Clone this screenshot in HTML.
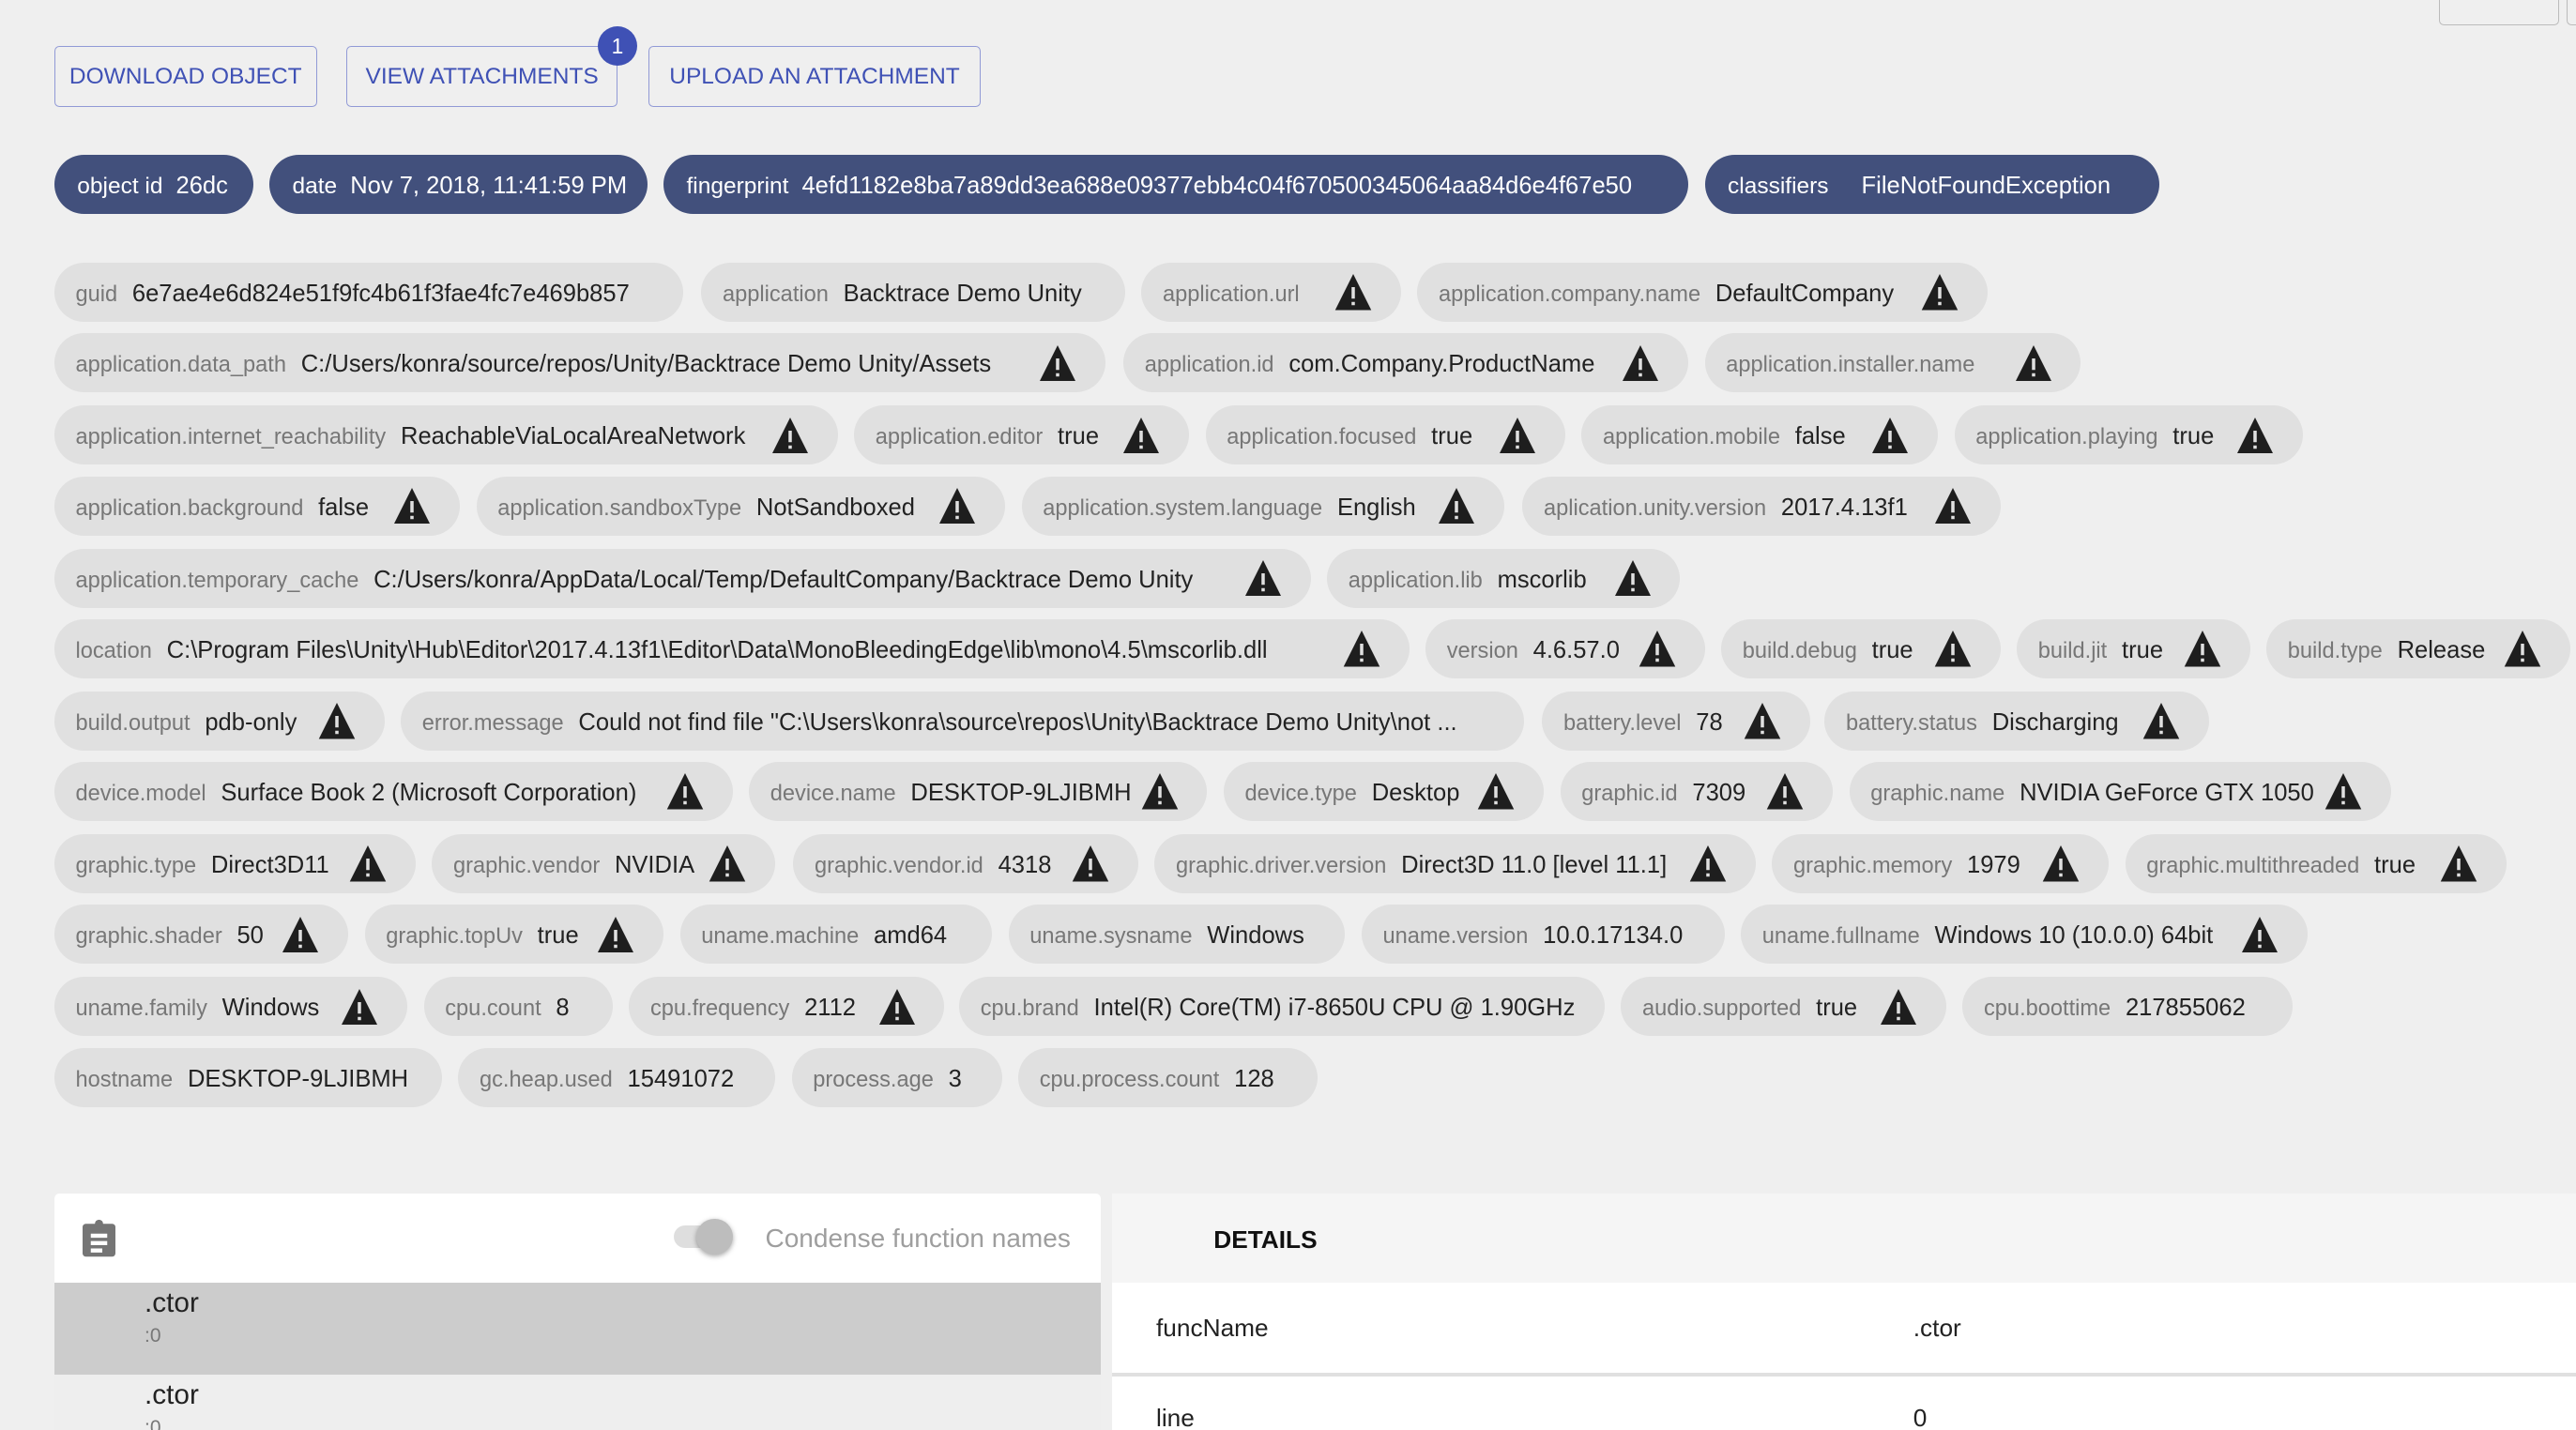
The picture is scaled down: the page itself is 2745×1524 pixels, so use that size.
<!DOCTYPE html>
<html><head><meta charset="utf-8"><style>
html,body{margin:0;padding:0;background:#efefef;overflow:hidden}
body{width:2745px;height:1524px}
#w{zoom:1.75;position:relative;width:1569px;height:871px;font-family:"Liberation Sans",Arial,sans-serif}
.b{position:absolute;top:28px;height:37px;box-sizing:border-box;border:1px solid #919ad6;border-radius:3px;color:#3f51b5;font-size:14px;line-height:36px;text-align:center}
.badge{position:absolute;left:364px;top:16px;width:24px;height:24px;border-radius:50%;background:#3f51b5;color:#fff;font-size:13px;line-height:24px;text-align:center}
.d{position:absolute;top:94px;height:36px;border-radius:18px;background:#42507c;color:#fff;white-space:nowrap;line-height:36px;box-sizing:border-box;padding-left:14px}
.d .l{font-size:14px;margin-right:8px}.d .v{font-size:14.6px}
.p{position:absolute;height:36px;border-radius:18px;background:#e0e0e0;white-space:nowrap;line-height:36px;box-sizing:border-box;padding-left:13px;overflow:hidden}
.p .l{font-size:13.5px;color:#777;margin-right:9px}.p .v{font-size:14.6px;color:#222}
.p svg{position:absolute;right:17px;top:7px;width:24px;height:22px}
</style></head><body><div id="w">
<div style="position:absolute;left:1485px;top:-4px;width:72px;height:18px;border:1px solid #bbb;border-radius:3px"></div>
<div style="position:absolute;left:1563px;top:-4px;width:20px;height:18px;border:1px solid #bbb;border-radius:3px"></div>
<div class="b" style="left:33px;width:160px">DOWNLOAD OBJECT</div>
<div class="b" style="left:211px;width:165px">VIEW ATTACHMENTS</div>
<div class="badge">1</div>
<div class="b" style="left:395px;width:202px">UPLOAD AN ATTACHMENT</div>
<div class="d" style="left:33px;width:121px"><span class="l">object id</span><span class="v">26dc</span></div>
<div class="d" style="left:164px;width:230px"><span class="l">date</span><span class="v">Nov 7, 2018, 11:41:59 PM</span></div>
<div class="d" style="left:404px;width:624px"><span class="l">fingerprint</span><span class="v">4efd1182e8ba7a89dd3ea688e09377ebb4c04f670500345064aa84d6e4f67e50</span></div>
<div class="d" style="left:1038px;width:277px"><span class="l" style="margin-right:20px">classifiers</span><span class="v">FileNotFoundException</span></div>
<svg width="0" height="0" style="position:absolute"><defs><symbol id="wn" viewBox="0 0 24 22"><path d="M12 0L23 22H1Z" fill="#1e1e1e"/><rect x="11" y="8" width="2" height="7" fill="#e0e0e0"/><rect x="11" y="17" width="2" height="2" fill="#e0e0e0"/></symbol></defs></svg>
<div class="p" style="top:160px;left:33px;width:383px"><span class="l">guid</span><span class="v">6e7ae4e6d824e51f9fc4b61f3fae4fc7e469b857</span></div>
<div class="p" style="top:160px;left:427px;width:258px"><span class="l">application</span><span class="v">Backtrace Demo Unity</span></div>
<div class="p" style="top:160px;left:695px;width:158px"><span class="l">application.url</span><svg><use href="#wn"/></svg></div>
<div class="p" style="top:160px;left:863px;width:347px"><span class="l">application.company.name</span><span class="v">DefaultCompany</span><svg><use href="#wn"/></svg></div>
<div class="p" style="top:203px;left:33px;width:640px"><span class="l">application.data_path</span><span class="v">C:/Users/konra/source/repos/Unity/Backtrace Demo Unity/Assets</span><svg><use href="#wn"/></svg></div>
<div class="p" style="top:203px;left:684px;width:344px"><span class="l">application.id</span><span class="v">com.Company.ProductName</span><svg><use href="#wn"/></svg></div>
<div class="p" style="top:203px;left:1038px;width:229px"><span class="l">application.installer.name</span><svg><use href="#wn"/></svg></div>
<div class="p" style="top:247px;left:33px;width:477px"><span class="l">application.internet_reachability</span><span class="v">ReachableViaLocalAreaNetwork</span><svg><use href="#wn"/></svg></div>
<div class="p" style="top:247px;left:520px;width:204px"><span class="l">application.editor</span><span class="v">true</span><svg><use href="#wn"/></svg></div>
<div class="p" style="top:247px;left:734px;width:219px"><span class="l">application.focused</span><span class="v">true</span><svg><use href="#wn"/></svg></div>
<div class="p" style="top:247px;left:963px;width:217px"><span class="l">application.mobile</span><span class="v">false</span><svg><use href="#wn"/></svg></div>
<div class="p" style="top:247px;left:1190px;width:212px"><span class="l">application.playing</span><span class="v">true</span><svg><use href="#wn"/></svg></div>
<div class="p" style="top:290px;left:33px;width:247px"><span class="l">application.background</span><span class="v">false</span><svg><use href="#wn"/></svg></div>
<div class="p" style="top:290px;left:290px;width:322px"><span class="l">application.sandboxType</span><span class="v">NotSandboxed</span><svg><use href="#wn"/></svg></div>
<div class="p" style="top:290px;left:622px;width:294px"><span class="l">application.system.language</span><span class="v">English</span><svg><use href="#wn"/></svg></div>
<div class="p" style="top:290px;left:927px;width:291px"><span class="l">aplication.unity.version</span><span class="v">2017.4.13f1</span><svg><use href="#wn"/></svg></div>
<div class="p" style="top:334px;left:33px;width:765px"><span class="l">application.temporary_cache</span><span class="v">C:/Users/konra/AppData/Local/Temp/DefaultCompany/Backtrace Demo Unity</span><svg><use href="#wn"/></svg></div>
<div class="p" style="top:334px;left:808px;width:215px"><span class="l">application.lib</span><span class="v">mscorlib</span><svg><use href="#wn"/></svg></div>
<div class="p" style="top:377px;left:33px;width:825px"><span class="l">location</span><span class="v">C:\Program Files\Unity\Hub\Editor\2017.4.13f1\Editor\Data\MonoBleedingEdge\lib\mono\4.5\mscorlib.dll</span><svg><use href="#wn"/></svg></div>
<div class="p" style="top:377px;left:868px;width:170px"><span class="l">version</span><span class="v">4.6.57.0</span><svg><use href="#wn"/></svg></div>
<div class="p" style="top:377px;left:1048px;width:170px"><span class="l">build.debug</span><span class="v">true</span><svg><use href="#wn"/></svg></div>
<div class="p" style="top:377px;left:1228px;width:142px"><span class="l">build.jit</span><span class="v">true</span><svg><use href="#wn"/></svg></div>
<div class="p" style="top:377px;left:1380px;width:185px"><span class="l">build.type</span><span class="v">Release</span><svg><use href="#wn"/></svg></div>
<div class="p" style="top:421px;left:33px;width:201px"><span class="l">build.output</span><span class="v">pdb-only</span><svg><use href="#wn"/></svg></div>
<div class="p" style="top:421px;left:244px;width:684px"><span class="l">error.message</span><span class="v">Could not find file "C:\Users\konra\source\repos\Unity\Backtrace Demo Unity\not ...</span></div>
<div class="p" style="top:421px;left:939px;width:163px"><span class="l">battery.level</span><span class="v">78</span><svg><use href="#wn"/></svg></div>
<div class="p" style="top:421px;left:1111px;width:234px"><span class="l">battery.status</span><span class="v">Discharging</span><svg><use href="#wn"/></svg></div>
<div class="p" style="top:464px;left:33px;width:413px"><span class="l">device.model</span><span class="v">Surface Book 2 (Microsoft Corporation)</span><svg><use href="#wn"/></svg></div>
<div class="p" style="top:464px;left:456px;width:279px"><span class="l">device.name</span><span class="v">DESKTOP-9LJIBMH</span><svg><use href="#wn"/></svg></div>
<div class="p" style="top:464px;left:745px;width:195px"><span class="l">device.type</span><span class="v">Desktop</span><svg><use href="#wn"/></svg></div>
<div class="p" style="top:464px;left:950px;width:166px"><span class="l">graphic.id</span><span class="v">7309</span><svg><use href="#wn"/></svg></div>
<div class="p" style="top:464px;left:1126px;width:330px"><span class="l">graphic.name</span><span class="v">NVIDIA GeForce GTX 1050</span><svg><use href="#wn"/></svg></div>
<div class="p" style="top:508px;left:33px;width:220px"><span class="l">graphic.type</span><span class="v">Direct3D11</span><svg><use href="#wn"/></svg></div>
<div class="p" style="top:508px;left:263px;width:209px"><span class="l">graphic.vendor</span><span class="v">NVIDIA</span><svg><use href="#wn"/></svg></div>
<div class="p" style="top:508px;left:483px;width:210px"><span class="l">graphic.vendor.id</span><span class="v">4318</span><svg><use href="#wn"/></svg></div>
<div class="p" style="top:508px;left:703px;width:366px"><span class="l">graphic.driver.version</span><span class="v">Direct3D 11.0 [level 11.1]</span><svg><use href="#wn"/></svg></div>
<div class="p" style="top:508px;left:1079px;width:205px"><span class="l">graphic.memory</span><span class="v">1979</span><svg><use href="#wn"/></svg></div>
<div class="p" style="top:508px;left:1294px;width:232px"><span class="l">graphic.multithreaded</span><span class="v">true</span><svg><use href="#wn"/></svg></div>
<div class="p" style="top:551px;left:33px;width:179px"><span class="l">graphic.shader</span><span class="v">50</span><svg><use href="#wn"/></svg></div>
<div class="p" style="top:551px;left:222px;width:182px"><span class="l">graphic.topUv</span><span class="v">true</span><svg><use href="#wn"/></svg></div>
<div class="p" style="top:551px;left:414px;width:190px"><span class="l">uname.machine</span><span class="v">amd64</span></div>
<div class="p" style="top:551px;left:614px;width:205px"><span class="l">uname.sysname</span><span class="v">Windows</span></div>
<div class="p" style="top:551px;left:829px;width:221px"><span class="l">uname.version</span><span class="v">10.0.17134.0</span></div>
<div class="p" style="top:551px;left:1060px;width:345px"><span class="l">uname.fullname</span><span class="v">Windows 10 (10.0.0) 64bit</span><svg><use href="#wn"/></svg></div>
<div class="p" style="top:595px;left:33px;width:215px"><span class="l">uname.family</span><span class="v">Windows</span><svg><use href="#wn"/></svg></div>
<div class="p" style="top:595px;left:258px;width:115px"><span class="l">cpu.count</span><span class="v">8</span></div>
<div class="p" style="top:595px;left:383px;width:192px"><span class="l">cpu.frequency</span><span class="v">2112</span><svg><use href="#wn"/></svg></div>
<div class="p" style="top:595px;left:584px;width:393px"><span class="l">cpu.brand</span><span class="v">Intel(R) Core(TM) i7-8650U CPU @ 1.90GHz</span></div>
<div class="p" style="top:595px;left:987px;width:198px"><span class="l">audio.supported</span><span class="v">true</span><svg><use href="#wn"/></svg></div>
<div class="p" style="top:595px;left:1195px;width:201px"><span class="l">cpu.boottime</span><span class="v">217855062</span></div>
<div class="p" style="top:638px;left:33px;width:236px"><span class="l">hostname</span><span class="v">DESKTOP-9LJIBMH</span></div>
<div class="p" style="top:638px;left:279px;width:193px"><span class="l">gc.heap.used</span><span class="v">15491072</span></div>
<div class="p" style="top:638px;left:482px;width:128px"><span class="l">process.age</span><span class="v">3</span></div>
<div class="p" style="top:638px;left:620px;width:182px"><span class="l">cpu.process.count</span><span class="v">128</span></div>

<div style="position:absolute;left:33px;top:727px;width:637px;height:150px;background:#fff;border-radius:3px 3px 0 0;overflow:hidden">
  <svg style="position:absolute;left:17px;top:15px" width="20" height="24" viewBox="0 0 20 24"><rect x="0" y="3" width="20" height="20" rx="2" fill="#757575"/><circle cx="10" cy="3" r="2.5" fill="#757575"/><rect x="5" y="9" width="10" height="2.5" fill="#fff"/><rect x="5" y="13.5" width="10" height="2.5" fill="#fff"/><rect x="5" y="18" width="7" height="2.5" fill="#fff"/></svg>
  <div style="position:absolute;left:377px;top:19px;width:34px;height:14px;border-radius:7px;background:#dedede"></div>
  <div style="position:absolute;left:391px;top:15px;width:22px;height:22px;border-radius:50%;background:#bdbdbd;box-shadow:0 1px 3px rgba(0,0,0,.35)"></div>
  <div style="position:absolute;left:433px;top:18px;font-size:16px;color:#9e9e9e">Condense function names</div>
  <div style="position:absolute;left:0;top:54px;width:637px;height:56px;background:#cccccc"></div>
  <div style="position:absolute;left:55px;top:57px;font-size:17px;color:#222">.ctor</div>
  <div style="position:absolute;left:55px;top:80px;font-size:12px;color:#777">:0</div>
  <div style="position:absolute;left:0;top:110px;width:637px;height:50px;background:#eeeeee"></div>
  <div style="position:absolute;left:55px;top:113px;font-size:17px;color:#222">.ctor</div>
  <div style="position:absolute;left:55px;top:136px;font-size:12px;color:#777">:0</div>
</div>
<div style="position:absolute;left:677px;top:727px;width:892px;height:54px;background:#f5f5f5"></div>
<div style="position:absolute;left:739px;top:746px;font-size:15px;font-weight:bold;color:#111">DETAILS</div>
<div style="position:absolute;left:677px;top:781px;width:892px;height:55px;background:#fff"></div>
<div style="position:absolute;left:677px;top:836px;width:892px;height:2px;background:#e0e0e0"></div>
<div style="position:absolute;left:677px;top:838px;width:892px;height:40px;background:#fff"></div>
<div style="position:absolute;left:704px;top:800px;font-size:15px;color:#222">funcName</div>
<div style="position:absolute;left:1165px;top:800px;font-size:15px;color:#222">.ctor</div>
<div style="position:absolute;left:704px;top:855px;font-size:15px;color:#222">line</div>
<div style="position:absolute;left:1165px;top:855px;font-size:15px;color:#222">0</div>
</div></body></html>
